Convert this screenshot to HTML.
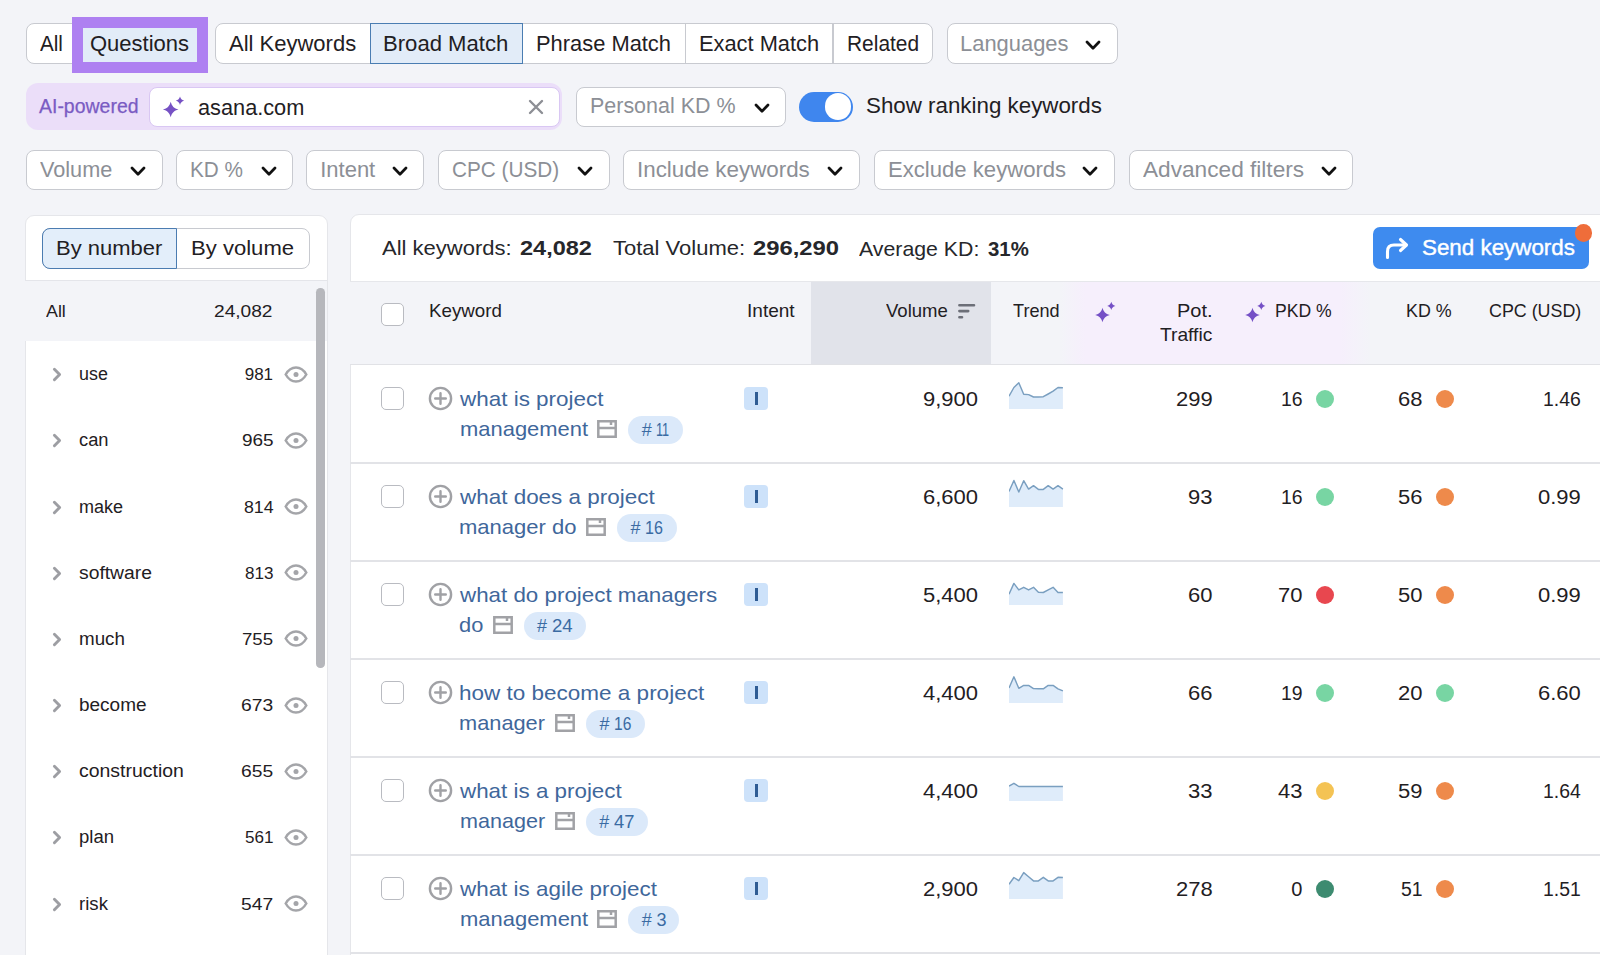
<!DOCTYPE html>
<html><head><meta charset="utf-8">
<style>
*{box-sizing:border-box;margin:0;padding:0}
html,body{width:1600px;height:955px;overflow:hidden;background:#f3f4f8;font-family:"Liberation Sans",sans-serif;color:#1f2023;position:relative}
.a{position:absolute}
.t{position:absolute;white-space:nowrap;line-height:1}
</style></head><body>
<div class="a" style="left:26px;top:23px;width:180px;height:41px;background:#fff;border:1.5px solid #c8cad0;border-radius:8px"></div>
<div class="a" style="left:78px;top:23px;width:127px;height:41px;background:#e2ecf8"></div>
<div class="t" style="left:39.70px;top:33.00px;font-size:22px;color:#1f2023;transform:scaleX(0.9388);transform-origin:0 0;">All</div>
<div class="t" style="left:90.00px;top:33.00px;font-size:22px;color:#1f2023;">Questions</div>
<div class="a" style="left:72px;top:16.5px;width:136.2px;height:56.7px;border:11px solid #ae80f1"></div>
<div class="a" style="left:215px;top:23px;width:718px;height:41px;background:#fff;border:1.5px solid #c8cad0;border-radius:8px"></div>
<div class="a" style="left:369.5px;top:23px;width:153.5px;height:41px;background:#e2ecf8;border:1.5px solid #4a7db2"></div>
<div class="a" style="left:684.5px;top:23px;width:1.5px;height:41px;background:#c8cad0"></div>
<div class="a" style="left:832px;top:23px;width:1.5px;height:41px;background:#c8cad0"></div>
<div class="t" style="left:229.00px;top:33.00px;font-size:22px;color:#1f2023;">All Keywords</div>
<div class="t" style="left:383.40px;top:33.00px;font-size:22px;color:#1f2023;transform:scaleX(1.0044);transform-origin:0 0;">Broad Match</div>
<div class="t" style="left:536.00px;top:33.00px;font-size:22px;color:#1f2023;transform:scaleX(0.9945);transform-origin:0 0;">Phrase Match</div>
<div class="t" style="left:699.00px;top:33.00px;font-size:22px;color:#1f2023;transform:scaleX(0.9917);transform-origin:0 0;">Exact Match</div>
<div class="t" style="left:847.00px;top:33.00px;font-size:22px;color:#1f2023;transform:scaleX(0.9505);transform-origin:0 0;">Related</div>
<div class="a" style="left:946.5px;top:23px;width:171.5px;height:41px;background:#fff;border:1.5px solid #c8cad0;border-radius:8px"></div>
<div class="t" style="left:960.00px;top:33.00px;font-size:22px;color:#8c8f96;transform:scaleX(0.9963);transform-origin:0 0;">Languages</div>
<svg class="a" style="left:1085px;top:39.5px;width:16px;height:10px" viewBox="0 0 16 10"><path d="M2 2 L8 8.2 L14 2" fill="none" stroke="#111" stroke-width="2.7" stroke-linecap="round" stroke-linejoin="round"/></svg>
<div class="a" style="left:26px;top:83px;width:536px;height:47px;background:#ebdef9;border-radius:12px"></div>
<div class="t" style="left:38.50px;top:96.00px;font-size:20px;color:#7a5bc3;transform:scaleX(0.9731);transform-origin:0 0;-webkit-text-stroke:0.25px #7a5bc3;">AI-powered</div>
<div class="a" style="left:149px;top:86.5px;width:410.5px;height:40.5px;background:#fff;border:1.5px solid #d9c7f3;border-radius:8px"></div>
<svg class="a" style="left:160px;top:94px;width:26px;height:26px" viewBox="0 0 26 26"><path d="M10.70 7.70 C11.95 12.22 13.98 14.25 18.50 15.50 C13.98 16.75 11.95 18.78 10.70 23.30 C9.45 18.78 7.42 16.75 2.90 15.50 C7.42 14.25 9.45 12.22 10.70 7.70ZM20.00 2.60 C20.67 5.04 21.76 6.13 24.20 6.80 C21.76 7.47 20.67 8.56 20.00 11.00 C19.33 8.56 18.24 7.47 15.80 6.80 C18.24 6.13 19.33 5.04 20.00 2.60Z" fill="#7651c4"/></svg>
<div class="t" style="left:198.30px;top:97.00px;font-size:22px;color:#1f2023;transform:scaleX(0.9879);transform-origin:0 0;">asana.com</div>
<svg class="a" style="left:528px;top:99px;width:16px;height:16px" viewBox="0 0 16 16"><path d="M2 2L14 14M14 2L2 14" stroke="#8d8f95" stroke-width="2.4" stroke-linecap="round"/></svg>
<div class="a" style="left:576px;top:86.5px;width:210px;height:40.5px;background:#fff;border:1.5px solid #c8cad0;border-radius:8px"></div>
<div class="t" style="left:589.75px;top:95.10px;font-size:22px;color:#8c8f96;transform:scaleX(0.9752);transform-origin:0 0;">Personal KD %</div>
<svg class="a" style="left:753.5px;top:102.5px;width:16px;height:10px" viewBox="0 0 16 10"><path d="M2 2 L8 8.2 L14 2" fill="none" stroke="#111" stroke-width="2.7" stroke-linecap="round" stroke-linejoin="round"/></svg>
<div class="a" style="left:798.5px;top:91.6px;width:54.299999999999955px;height:30.0px;background:#3f86ee;border-radius:15px"></div>
<div class="a" style="left:824.7px;top:93px;width:26.799999999999955px;height:26.799999999999997px;background:#fff;border-radius:50%"></div>
<div class="t" style="left:866.00px;top:94.80px;font-size:22px;color:#1f2023;transform:scaleX(1.0153);transform-origin:0 0;">Show ranking keywords</div>
<div class="a" style="left:26px;top:149.7px;width:136.5px;height:40.70000000000002px;background:#fff;border:1.5px solid #c8cad0;border-radius:8px"></div>
<div class="t" style="left:40.00px;top:158.50px;font-size:22px;color:#8c8f96;transform:scaleX(0.9850);transform-origin:0 0;">Volume</div>
<svg class="a" style="left:130.0px;top:165.5px;width:16px;height:10px" viewBox="0 0 16 10"><path d="M2 2 L8 8.2 L14 2" fill="none" stroke="#111" stroke-width="2.7" stroke-linecap="round" stroke-linejoin="round"/></svg>
<div class="a" style="left:175.6px;top:149.7px;width:117.6px;height:40.70000000000002px;background:#fff;border:1.5px solid #c8cad0;border-radius:8px"></div>
<div class="t" style="left:189.60px;top:158.50px;font-size:22px;color:#8c8f96;transform:scaleX(0.9422);transform-origin:0 0;">KD %</div>
<svg class="a" style="left:260.7px;top:165.5px;width:16px;height:10px" viewBox="0 0 16 10"><path d="M2 2 L8 8.2 L14 2" fill="none" stroke="#111" stroke-width="2.7" stroke-linecap="round" stroke-linejoin="round"/></svg>
<div class="a" style="left:306.2px;top:149.7px;width:118.19999999999999px;height:40.70000000000002px;background:#fff;border:1.5px solid #c8cad0;border-radius:8px"></div>
<div class="t" style="left:320.20px;top:158.50px;font-size:22px;color:#8c8f96;">Intent</div>
<svg class="a" style="left:391.9px;top:165.5px;width:16px;height:10px" viewBox="0 0 16 10"><path d="M2 2 L8 8.2 L14 2" fill="none" stroke="#111" stroke-width="2.7" stroke-linecap="round" stroke-linejoin="round"/></svg>
<div class="a" style="left:438px;top:149.7px;width:171.70000000000005px;height:40.70000000000002px;background:#fff;border:1.5px solid #c8cad0;border-radius:8px"></div>
<div class="t" style="left:452.00px;top:158.50px;font-size:22px;color:#8c8f96;transform:scaleX(0.9433);transform-origin:0 0;">CPC (USD)</div>
<svg class="a" style="left:577.2px;top:165.5px;width:16px;height:10px" viewBox="0 0 16 10"><path d="M2 2 L8 8.2 L14 2" fill="none" stroke="#111" stroke-width="2.7" stroke-linecap="round" stroke-linejoin="round"/></svg>
<div class="a" style="left:622.9px;top:149.7px;width:237.0px;height:40.70000000000002px;background:#fff;border:1.5px solid #c8cad0;border-radius:8px"></div>
<div class="t" style="left:636.90px;top:158.50px;font-size:22px;color:#8c8f96;transform:scaleX(1.0165);transform-origin:0 0;">Include keywords</div>
<svg class="a" style="left:827.4px;top:165.5px;width:16px;height:10px" viewBox="0 0 16 10"><path d="M2 2 L8 8.2 L14 2" fill="none" stroke="#111" stroke-width="2.7" stroke-linecap="round" stroke-linejoin="round"/></svg>
<div class="a" style="left:873.5px;top:149.7px;width:241.4000000000001px;height:40.70000000000002px;background:#fff;border:1.5px solid #c8cad0;border-radius:8px"></div>
<div class="t" style="left:887.50px;top:158.50px;font-size:22px;color:#8c8f96;transform:scaleX(1.0048);transform-origin:0 0;">Exclude keywords</div>
<svg class="a" style="left:1082.4px;top:165.5px;width:16px;height:10px" viewBox="0 0 16 10"><path d="M2 2 L8 8.2 L14 2" fill="none" stroke="#111" stroke-width="2.7" stroke-linecap="round" stroke-linejoin="round"/></svg>
<div class="a" style="left:1128.5px;top:149.7px;width:224.79999999999995px;height:40.70000000000002px;background:#fff;border:1.5px solid #c8cad0;border-radius:8px"></div>
<div class="t" style="left:1142.50px;top:158.50px;font-size:22px;color:#8c8f96;transform:scaleX(1.0294);transform-origin:0 0;">Advanced filters</div>
<svg class="a" style="left:1320.8px;top:165.5px;width:16px;height:10px" viewBox="0 0 16 10"><path d="M2 2 L8 8.2 L14 2" fill="none" stroke="#111" stroke-width="2.7" stroke-linecap="round" stroke-linejoin="round"/></svg>
<div class="a" style="left:24.5px;top:214.5px;width:303.0px;height:785.5px;background:#fff;border:1px solid #e5e6ea;border-radius:9px"></div>
<div class="a" style="left:42px;top:227.5px;width:268px;height:41.10000000000002px;background:#fff;border:1.5px solid #c8cad0;border-radius:8px"></div>
<div class="a" style="left:42px;top:227.5px;width:134.5px;height:41.10000000000002px;background:#e3eefa;border:1.5px solid #4b7cb1;border-radius:8px 0 0 8px"></div>
<div class="t" style="left:56.00px;top:237.00px;font-size:21px;color:#1f2023;transform:scaleX(1.0473);transform-origin:0 0;">By number</div>
<div class="t" style="left:191.00px;top:237.00px;font-size:21px;color:#1f2023;transform:scaleX(1.0510);transform-origin:0 0;">By volume</div>
<div class="a" style="left:25.3px;top:280px;width:301.5px;height:1px;background:#e4e5ea"></div>
<div class="a" style="left:25.3px;top:281px;width:301.5px;height:60.30000000000001px;background:#f3f4f8"></div>
<div class="t" style="left:46.00px;top:303.00px;font-size:17px;color:#1f2023;transform:scaleX(1.0500);transform-origin:0 0;">All</div>
<div class="t" style="left:214.00px;top:303.00px;font-size:17px;color:#1f2023;transform:scaleX(1.1250);transform-origin:0 0;">24,082</div>
<svg class="a" style="left:52px;top:367.3px;width:10px;height:15px" viewBox="0 0 10 15"><path d="M2.4 2.2 L7.6 7.5 L2.4 12.8" fill="none" stroke="#9d9ea3" stroke-width="2.9" stroke-linecap="round" stroke-linejoin="round"/></svg>
<div class="t" style="left:79.00px;top:365.30px;font-size:18px;color:#1f2023;transform:scaleX(0.9931);transform-origin:0 0;">use</div>
<div class="t" style="left:244.70px;top:366.30px;font-size:17px;color:#1f2023;">981</div>
<svg class="a" style="left:283.8px;top:365.8px;width:24px;height:17px" viewBox="0 0 24 17"><path d="M1.7 8.5 C4.6 3.4 8 1.5 12 1.5 C16 1.5 19.4 3.4 22.3 8.5 C19.4 13.6 16 15.5 12 15.5 C8 15.5 4.6 13.6 1.7 8.5Z" fill="none" stroke="#a4a5a9" stroke-width="2.5"/><circle cx="12" cy="8.5" r="2.5" fill="#a4a5a9"/></svg>
<svg class="a" style="left:52px;top:433.45000000000005px;width:10px;height:15px" viewBox="0 0 10 15"><path d="M2.4 2.2 L7.6 7.5 L2.4 12.8" fill="none" stroke="#9d9ea3" stroke-width="2.9" stroke-linecap="round" stroke-linejoin="round"/></svg>
<div class="t" style="left:79.00px;top:431.45px;font-size:18px;color:#1f2023;transform:scaleX(1.0172);transform-origin:0 0;">can</div>
<div class="t" style="left:241.50px;top:432.45px;font-size:17px;color:#1f2023;transform:scaleX(1.1150);transform-origin:0 0;">965</div>
<svg class="a" style="left:283.8px;top:431.95000000000005px;width:24px;height:17px" viewBox="0 0 24 17"><path d="M1.7 8.5 C4.6 3.4 8 1.5 12 1.5 C16 1.5 19.4 3.4 22.3 8.5 C19.4 13.6 16 15.5 12 15.5 C8 15.5 4.6 13.6 1.7 8.5Z" fill="none" stroke="#a4a5a9" stroke-width="2.5"/><circle cx="12" cy="8.5" r="2.5" fill="#a4a5a9"/></svg>
<svg class="a" style="left:52px;top:499.6px;width:10px;height:15px" viewBox="0 0 10 15"><path d="M2.4 2.2 L7.6 7.5 L2.4 12.8" fill="none" stroke="#9d9ea3" stroke-width="2.9" stroke-linecap="round" stroke-linejoin="round"/></svg>
<div class="t" style="left:79.00px;top:497.60px;font-size:18px;color:#1f2023;">make</div>
<div class="t" style="left:243.50px;top:498.60px;font-size:17px;color:#1f2023;transform:scaleX(1.0442);transform-origin:0 0;">814</div>
<svg class="a" style="left:283.8px;top:498.1px;width:24px;height:17px" viewBox="0 0 24 17"><path d="M1.7 8.5 C4.6 3.4 8 1.5 12 1.5 C16 1.5 19.4 3.4 22.3 8.5 C19.4 13.6 16 15.5 12 15.5 C8 15.5 4.6 13.6 1.7 8.5Z" fill="none" stroke="#a4a5a9" stroke-width="2.5"/><circle cx="12" cy="8.5" r="2.5" fill="#a4a5a9"/></svg>
<svg class="a" style="left:52px;top:565.75px;width:10px;height:15px" viewBox="0 0 10 15"><path d="M2.4 2.2 L7.6 7.5 L2.4 12.8" fill="none" stroke="#9d9ea3" stroke-width="2.9" stroke-linecap="round" stroke-linejoin="round"/></svg>
<div class="t" style="left:79.00px;top:563.75px;font-size:18px;color:#1f2023;transform:scaleX(1.0721);transform-origin:0 0;">software</div>
<div class="t" style="left:244.60px;top:564.75px;font-size:17px;color:#1f2023;transform:scaleX(1.0053);transform-origin:0 0;">813</div>
<svg class="a" style="left:283.8px;top:564.25px;width:24px;height:17px" viewBox="0 0 24 17"><path d="M1.7 8.5 C4.6 3.4 8 1.5 12 1.5 C16 1.5 19.4 3.4 22.3 8.5 C19.4 13.6 16 15.5 12 15.5 C8 15.5 4.6 13.6 1.7 8.5Z" fill="none" stroke="#a4a5a9" stroke-width="2.5"/><circle cx="12" cy="8.5" r="2.5" fill="#a4a5a9"/></svg>
<svg class="a" style="left:52px;top:631.9000000000001px;width:10px;height:15px" viewBox="0 0 10 15"><path d="M2.4 2.2 L7.6 7.5 L2.4 12.8" fill="none" stroke="#9d9ea3" stroke-width="2.9" stroke-linecap="round" stroke-linejoin="round"/></svg>
<div class="t" style="left:79.00px;top:629.90px;font-size:18px;color:#1f2023;transform:scaleX(1.0432);transform-origin:0 0;">much</div>
<div class="t" style="left:242.00px;top:630.90px;font-size:17px;color:#1f2023;transform:scaleX(1.0973);transform-origin:0 0;">755</div>
<svg class="a" style="left:283.8px;top:630.4000000000001px;width:24px;height:17px" viewBox="0 0 24 17"><path d="M1.7 8.5 C4.6 3.4 8 1.5 12 1.5 C16 1.5 19.4 3.4 22.3 8.5 C19.4 13.6 16 15.5 12 15.5 C8 15.5 4.6 13.6 1.7 8.5Z" fill="none" stroke="#a4a5a9" stroke-width="2.5"/><circle cx="12" cy="8.5" r="2.5" fill="#a4a5a9"/></svg>
<svg class="a" style="left:52px;top:698.05px;width:10px;height:15px" viewBox="0 0 10 15"><path d="M2.4 2.2 L7.6 7.5 L2.4 12.8" fill="none" stroke="#9d9ea3" stroke-width="2.9" stroke-linecap="round" stroke-linejoin="round"/></svg>
<div class="t" style="left:79.00px;top:696.05px;font-size:18px;color:#1f2023;transform:scaleX(1.0547);transform-origin:0 0;">become</div>
<div class="t" style="left:241.00px;top:697.05px;font-size:17px;color:#1f2023;transform:scaleX(1.1327);transform-origin:0 0;">673</div>
<svg class="a" style="left:283.8px;top:696.55px;width:24px;height:17px" viewBox="0 0 24 17"><path d="M1.7 8.5 C4.6 3.4 8 1.5 12 1.5 C16 1.5 19.4 3.4 22.3 8.5 C19.4 13.6 16 15.5 12 15.5 C8 15.5 4.6 13.6 1.7 8.5Z" fill="none" stroke="#a4a5a9" stroke-width="2.5"/><circle cx="12" cy="8.5" r="2.5" fill="#a4a5a9"/></svg>
<svg class="a" style="left:52px;top:764.2px;width:10px;height:15px" viewBox="0 0 10 15"><path d="M2.4 2.2 L7.6 7.5 L2.4 12.8" fill="none" stroke="#9d9ea3" stroke-width="2.9" stroke-linecap="round" stroke-linejoin="round"/></svg>
<div class="t" style="left:79.00px;top:762.20px;font-size:18px;color:#1f2023;transform:scaleX(1.0804);transform-origin:0 0;">construction</div>
<div class="t" style="left:241.00px;top:763.20px;font-size:17px;color:#1f2023;transform:scaleX(1.1327);transform-origin:0 0;">655</div>
<svg class="a" style="left:283.8px;top:762.7px;width:24px;height:17px" viewBox="0 0 24 17"><path d="M1.7 8.5 C4.6 3.4 8 1.5 12 1.5 C16 1.5 19.4 3.4 22.3 8.5 C19.4 13.6 16 15.5 12 15.5 C8 15.5 4.6 13.6 1.7 8.5Z" fill="none" stroke="#a4a5a9" stroke-width="2.5"/><circle cx="12" cy="8.5" r="2.5" fill="#a4a5a9"/></svg>
<svg class="a" style="left:52px;top:830.3500000000001px;width:10px;height:15px" viewBox="0 0 10 15"><path d="M2.4 2.2 L7.6 7.5 L2.4 12.8" fill="none" stroke="#9d9ea3" stroke-width="2.9" stroke-linecap="round" stroke-linejoin="round"/></svg>
<div class="t" style="left:79.00px;top:828.35px;font-size:18px;color:#1f2023;transform:scaleX(1.0294);transform-origin:0 0;">plan</div>
<div class="t" style="left:244.60px;top:829.35px;font-size:17px;color:#1f2023;transform:scaleX(1.0053);transform-origin:0 0;">561</div>
<svg class="a" style="left:283.8px;top:828.8500000000001px;width:24px;height:17px" viewBox="0 0 24 17"><path d="M1.7 8.5 C4.6 3.4 8 1.5 12 1.5 C16 1.5 19.4 3.4 22.3 8.5 C19.4 13.6 16 15.5 12 15.5 C8 15.5 4.6 13.6 1.7 8.5Z" fill="none" stroke="#a4a5a9" stroke-width="2.5"/><circle cx="12" cy="8.5" r="2.5" fill="#a4a5a9"/></svg>
<svg class="a" style="left:52px;top:896.5px;width:10px;height:15px" viewBox="0 0 10 15"><path d="M2.4 2.2 L7.6 7.5 L2.4 12.8" fill="none" stroke="#9d9ea3" stroke-width="2.9" stroke-linecap="round" stroke-linejoin="round"/></svg>
<div class="t" style="left:79.00px;top:894.50px;font-size:18px;color:#1f2023;transform:scaleX(1.0336);transform-origin:0 0;">risk</div>
<div class="t" style="left:241.00px;top:895.50px;font-size:17px;color:#1f2023;transform:scaleX(1.1327);transform-origin:0 0;">547</div>
<svg class="a" style="left:283.8px;top:895.0px;width:24px;height:17px" viewBox="0 0 24 17"><path d="M1.7 8.5 C4.6 3.4 8 1.5 12 1.5 C16 1.5 19.4 3.4 22.3 8.5 C19.4 13.6 16 15.5 12 15.5 C8 15.5 4.6 13.6 1.7 8.5Z" fill="none" stroke="#a4a5a9" stroke-width="2.5"/><circle cx="12" cy="8.5" r="2.5" fill="#a4a5a9"/></svg>
<div class="a" style="left:316px;top:288px;width:8.600000000000023px;height:380px;background:#b6b7bc;border-radius:4.3px"></div>
<div class="a" style="left:349.5px;top:213.8px;width:1290.5px;height:786.2px;background:#fff;border:1px solid #e5e6ea;border-radius:9px"></div>
<div class="t" style="left:381.70px;top:237.00px;font-size:21px;color:#26272b;transform:scaleX(1.0481);transform-origin:0 0;">All keywords:</div>
<div class="t" style="left:520.00px;top:237.00px;font-size:21px;color:#26272b;font-weight:700;transform:scaleX(1.1191);transform-origin:0 0;">24,082</div>
<div class="t" style="left:612.50px;top:237.00px;font-size:21px;color:#26272b;transform:scaleX(1.0476);transform-origin:0 0;">Total Volume:</div>
<div class="t" style="left:752.80px;top:237.00px;font-size:21px;color:#26272b;font-weight:700;transform:scaleX(1.1342);transform-origin:0 0;">296,290</div>
<div class="t" style="left:859.00px;top:237.50px;font-size:21px;color:#26272b;transform:scaleX(1.0139);transform-origin:0 0;">Average KD:</div>
<div class="t" style="left:988.00px;top:237.50px;font-size:21px;color:#26272b;font-weight:700;transform:scaleX(0.9702);transform-origin:0 0;">31%</div>
<div class="a" style="left:1373.2px;top:227px;width:216.29999999999995px;height:42px;background:#3e8bef;border-radius:7px"></div>
<svg class="a" style="left:1384px;top:236px;width:27px;height:24px" viewBox="0 0 27 24"><path d="M3.5 21.5 V15.5 Q3.5 9 10 9 H22" fill="none" stroke="#fff" stroke-width="3.1" stroke-linecap="round" stroke-linejoin="round"/><path d="M16.5 3.5 L22.5 9 L16.5 14.5" fill="none" stroke="#fff" stroke-width="3.1" stroke-linecap="round" stroke-linejoin="round"/></svg>
<div class="t" style="left:1421.80px;top:236.80px;font-size:22px;color:#fff;transform:scaleX(1.0166);transform-origin:0 0;-webkit-text-stroke:0.4px #fff;">Send keywords</div>
<div class="a" style="left:1574.8px;top:224.3px;width:17.4px;height:17.4px;border-radius:50%;background:#ef6d3a"></div>
<div class="a" style="left:350px;top:281px;width:1290px;height:83.5px;background:#f3f4f8"></div>
<div class="a" style="left:1060px;top:281px;width:310px;height:83.5px;background:linear-gradient(90deg,rgba(246,239,252,0) 0px,#f6effc 25px,#f6effc 280px,rgba(246,239,252,0) 310px)"></div>
<div class="a" style="left:810.5px;top:281px;width:180.29999999999995px;height:83.5px;background:#e1e3ea"></div>
<div class="a" style="left:350px;top:280.5px;width:1290px;height:1.0px;background:#e6e7eb"></div>
<div class="a" style="left:350px;top:364px;width:1290px;height:1.1999999999999886px;background:#e1e2e6"></div>
<div class="a" style="left:381px;top:303px;width:23px;height:23px;border:1.5px solid #b9bbc1;border-radius:5px;background:#fff"></div>
<div class="t" style="left:429.40px;top:301.40px;font-size:19px;color:#1f2023;transform:scaleX(0.9851);transform-origin:0 0;">Keyword</div>
<div class="t" style="left:747.40px;top:301.00px;font-size:19px;color:#1f2023;transform:scaleX(1.0021);transform-origin:0 0;">Intent</div>
<div class="t" style="left:886.00px;top:301.00px;font-size:19px;color:#1f2023;transform:scaleX(0.9764);transform-origin:0 0;">Volume</div>
<svg class="a" style="left:957px;top:303px;width:20px;height:17px" viewBox="0 0 20 17"><path d="M2.4 2.2H17M2.4 8.1H11.2M2.4 14.3H5" stroke="#6c6f78" stroke-width="2.6" stroke-linecap="round"/></svg>
<div class="t" style="left:1012.70px;top:301.00px;font-size:19px;color:#1f2023;transform:scaleX(0.9531);transform-origin:0 0;">Trend</div>
<svg class="a" style="left:1094.5px;top:300.5px;width:22px;height:22px" viewBox="0 0 22 22"><path d="M7.50 6.70 C8.67 10.93 10.57 12.83 14.80 14.00 C10.57 15.17 8.67 17.07 7.50 21.30 C6.33 17.07 4.43 15.17 0.20 14.00 C4.43 12.83 6.33 10.93 7.50 6.70ZM16.30 0.80 C16.96 3.18 18.02 4.24 20.40 4.90 C18.02 5.56 16.96 6.62 16.30 9.00 C15.64 6.62 14.58 5.56 12.20 4.90 C14.58 4.24 15.64 3.18 16.30 0.80Z" fill="#7550c6"/></svg>
<div class="t" style="left:1177.16px;top:301.00px;font-size:19px;color:#1f2023;transform:scaleX(1.0500);transform-origin:0 0;">Pot.</div>
<div class="t" style="left:1160.00px;top:325.00px;font-size:19px;color:#1f2023;transform:scaleX(1.0106);transform-origin:0 0;">Traffic</div>
<svg class="a" style="left:1245px;top:300.5px;width:22px;height:22px" viewBox="0 0 22 22"><path d="M7.50 6.70 C8.67 10.93 10.57 12.83 14.80 14.00 C10.57 15.17 8.67 17.07 7.50 21.30 C6.33 17.07 4.43 15.17 0.20 14.00 C4.43 12.83 6.33 10.93 7.50 6.70ZM16.30 0.80 C16.96 3.18 18.02 4.24 20.40 4.90 C18.02 5.56 16.96 6.62 16.30 9.00 C15.64 6.62 14.58 5.56 12.20 4.90 C14.58 4.24 15.64 3.18 16.30 0.80Z" fill="#7550c6"/></svg>
<div class="t" style="left:1275.30px;top:301.00px;font-size:19px;color:#1f2023;transform:scaleX(0.9257);transform-origin:0 0;">PKD %</div>
<div class="t" style="left:1406.40px;top:301.00px;font-size:19px;color:#1f2023;transform:scaleX(0.9402);transform-origin:0 0;">KD %</div>
<div class="t" style="left:1488.50px;top:301.00px;font-size:19px;color:#1f2023;transform:scaleX(0.9394);transform-origin:0 0;">CPC (USD)</div>
<div class="a" style="left:381px;top:387px;width:23px;height:23px;border:1.5px solid #b9bbc1;border-radius:5px;background:#fff"></div>
<svg class="a" style="left:428px;top:386px;width:25px;height:25px" viewBox="0 0 25 25"><circle cx="12.5" cy="12.5" r="10.6" fill="none" stroke="#a0a1a5" stroke-width="2.4"/><path d="M12.5 7.2V17.8M7.2 12.5H17.8" stroke="#a0a1a5" stroke-width="2.4" stroke-linecap="round"/></svg>
<div class="t" style="left:460.07px;top:387.50px;font-size:21px;color:#3f679b;transform:scaleX(1.0691);transform-origin:0 0;">what is project</div>
<div class="t" style="left:459.80px;top:417.50px;font-size:21px;color:#3f679b;transform:scaleX(1.0449);transform-origin:0 0;">management</div>
<svg class="a" style="left:596.5px;top:420px;width:20px;height:18px" viewBox="0 0 20 18"><path d="M1.3 1.3H18.7V16.7H1.3Z M1.3 8H18.7 M14 1.3V5" fill="none" stroke="#a1a2a6" stroke-width="2.5"/></svg>
<div class="a" style="left:628.4px;top:415.6px;width:55.0px;height:28.399999999999977px;background:#dbe9fa;border-radius:15px"></div>
<div class="t" style="left:641.70px;top:420.60px;font-size:18px;color:#3a6ba3;">#</div>
<div class="t" style="left:656.40px;top:420.60px;font-size:18px;color:#3a6ba3;transform:scaleX(0.7040);transform-origin:0 0;">11</div>
<div class="a" style="left:744.4px;top:387px;width:23.600000000000023px;height:23.100000000000023px;background:#cde2fa;border-radius:4px"></div>
<div class="a" style="left:755.2px;top:391.7px;width:2.599999999999909px;height:13.0px;background:#2f5c94"></div>
<div class="t" style="left:922.60px;top:389.00px;font-size:20px;color:#1f2023;transform:scaleX(1.1000);transform-origin:0 0;">9,900</div>
<svg class="a" style="left:1009px;top:381px;width:56px;height:30px" viewBox="0 0 56 30"><path d="M0,15.20 L0.00,15.20 4.90,6.50 9.80,1.80 14.70,13.30 19.60,13.60 24.50,16.00 29.40,16.00 34.30,15.70 39.20,13.00 44.10,10.20 49.00,6.50 53.90,6.80 L53.9,28 L0,28Z" fill="#dfecfa"/><polyline points="0.00,15.20 4.90,6.50 9.80,1.80 14.70,13.30 19.60,13.60 24.50,16.00 29.40,16.00 34.30,15.70 39.20,13.00 44.10,10.20 49.00,6.50 53.90,6.80" fill="none" stroke="#7a9fc0" stroke-width="1.45" stroke-linejoin="round"/></svg>
<div class="t" style="left:1175.55px;top:389.00px;font-size:20px;color:#1f2023;transform:scaleX(1.1000);transform-origin:0 0;">299</div>
<div class="t" style="left:1280.92px;top:389.00px;font-size:20px;color:#1f2023;transform:scaleX(0.9700);transform-origin:0 0;">16</div>
<div class="a" style="left:1315.75px;top:389.5px;width:18px;height:18px;border-radius:50%;background:#78d5a3"></div>
<div class="t" style="left:1398.28px;top:389.00px;font-size:20px;color:#1f2023;transform:scaleX(1.1000);transform-origin:0 0;">68</div>
<div class="a" style="left:1436px;top:389.5px;width:18px;height:18px;border-radius:50%;background:#ee8a4b"></div>
<div class="t" style="left:1543.17px;top:389.00px;font-size:20px;color:#1f2023;transform:scaleX(0.9700);transform-origin:0 0;">1.46</div>
<div class="a" style="left:350px;top:462px;width:1290px;height:1.5px;background:#e2e3e7"></div>
<div class="a" style="left:381px;top:485px;width:23px;height:23px;border:1.5px solid #b9bbc1;border-radius:5px;background:#fff"></div>
<svg class="a" style="left:428px;top:484px;width:25px;height:25px" viewBox="0 0 25 25"><circle cx="12.5" cy="12.5" r="10.6" fill="none" stroke="#a0a1a5" stroke-width="2.4"/><path d="M12.5 7.2V17.8M7.2 12.5H17.8" stroke="#a0a1a5" stroke-width="2.4" stroke-linecap="round"/></svg>
<div class="t" style="left:459.67px;top:485.50px;font-size:21px;color:#3f679b;transform:scaleX(1.0689);transform-origin:0 0;">what does a project</div>
<div class="t" style="left:459.40px;top:515.50px;font-size:21px;color:#3f679b;transform:scaleX(1.0491);transform-origin:0 0;">manager do</div>
<svg class="a" style="left:585.8px;top:518px;width:20px;height:18px" viewBox="0 0 20 18"><path d="M1.3 1.3H18.7V16.7H1.3Z M1.3 8H18.7 M14 1.3V5" fill="none" stroke="#a1a2a6" stroke-width="2.5"/></svg>
<div class="a" style="left:617.1px;top:513.6px;width:59.69999999999993px;height:28.399999999999977px;background:#dbe9fa;border-radius:15px"></div>
<div class="t" style="left:630.40px;top:518.60px;font-size:18px;color:#3a6ba3;">#</div>
<div class="t" style="left:645.10px;top:518.60px;font-size:18px;color:#3a6ba3;transform:scaleX(0.8950);transform-origin:0 0;">16</div>
<div class="a" style="left:744.4px;top:485px;width:23.600000000000023px;height:23.100000000000023px;background:#cde2fa;border-radius:4px"></div>
<div class="a" style="left:755.2px;top:489.7px;width:2.599999999999909px;height:13.0px;background:#2f5c94"></div>
<div class="t" style="left:922.60px;top:487.00px;font-size:20px;color:#1f2023;transform:scaleX(1.1000);transform-origin:0 0;">6,600</div>
<svg class="a" style="left:1009px;top:479px;width:56px;height:30px" viewBox="0 0 56 30"><path d="M0,12.50 L0.00,12.50 4.90,1.50 9.80,13.00 14.70,1.70 19.60,10.10 24.50,6.70 29.40,10.40 34.30,10.40 39.20,6.70 44.10,10.10 49.00,6.70 53.90,10.10 L53.9,28 L0,28Z" fill="#dfecfa"/><polyline points="0.00,12.50 4.90,1.50 9.80,13.00 14.70,1.70 19.60,10.10 24.50,6.70 29.40,10.40 34.30,10.40 39.20,6.70 44.10,10.10 49.00,6.70 53.90,10.10" fill="none" stroke="#7a9fc0" stroke-width="1.45" stroke-linejoin="round"/></svg>
<div class="t" style="left:1187.93px;top:487.00px;font-size:20px;color:#1f2023;transform:scaleX(1.1000);transform-origin:0 0;">93</div>
<div class="t" style="left:1280.92px;top:487.00px;font-size:20px;color:#1f2023;transform:scaleX(0.9700);transform-origin:0 0;">16</div>
<div class="a" style="left:1315.75px;top:487.5px;width:18px;height:18px;border-radius:50%;background:#78d5a3"></div>
<div class="t" style="left:1398.28px;top:487.00px;font-size:20px;color:#1f2023;transform:scaleX(1.1000);transform-origin:0 0;">56</div>
<div class="a" style="left:1436px;top:487.5px;width:18px;height:18px;border-radius:50%;background:#ee8a4b"></div>
<div class="t" style="left:1538.10px;top:487.00px;font-size:20px;color:#1f2023;transform:scaleX(1.1000);transform-origin:0 0;">0.99</div>
<div class="a" style="left:350px;top:560px;width:1290px;height:1.5px;background:#e2e3e7"></div>
<div class="a" style="left:381px;top:583px;width:23px;height:23px;border:1.5px solid #b9bbc1;border-radius:5px;background:#fff"></div>
<svg class="a" style="left:428px;top:582px;width:25px;height:25px" viewBox="0 0 25 25"><circle cx="12.5" cy="12.5" r="10.6" fill="none" stroke="#a0a1a5" stroke-width="2.4"/><path d="M12.5 7.2V17.8M7.2 12.5H17.8" stroke="#a0a1a5" stroke-width="2.4" stroke-linecap="round"/></svg>
<div class="t" style="left:459.67px;top:583.50px;font-size:21px;color:#3f679b;transform:scaleX(1.0645);transform-origin:0 0;">what do project managers</div>
<div class="t" style="left:459.40px;top:613.50px;font-size:21px;color:#3f679b;transform:scaleX(1.0409);transform-origin:0 0;">do</div>
<svg class="a" style="left:492.5px;top:616px;width:20px;height:18px" viewBox="0 0 20 18"><path d="M1.3 1.3H18.7V16.7H1.3Z M1.3 8H18.7 M14 1.3V5" fill="none" stroke="#a1a2a6" stroke-width="2.5"/></svg>
<div class="a" style="left:523.8px;top:611.6px;width:62.5px;height:28.399999999999977px;background:#dbe9fa;border-radius:15px"></div>
<div class="t" style="left:537.10px;top:616.60px;font-size:18px;color:#3a6ba3;">#</div>
<div class="t" style="left:551.80px;top:616.60px;font-size:18px;color:#3a6ba3;transform:scaleX(1.0350);transform-origin:0 0;">24</div>
<div class="a" style="left:744.4px;top:583px;width:23.600000000000023px;height:23.100000000000023px;background:#cde2fa;border-radius:4px"></div>
<div class="a" style="left:755.2px;top:587.7px;width:2.599999999999909px;height:13.0px;background:#2f5c94"></div>
<div class="t" style="left:922.60px;top:585.00px;font-size:20px;color:#1f2023;transform:scaleX(1.1000);transform-origin:0 0;">5,400</div>
<svg class="a" style="left:1009px;top:577px;width:56px;height:30px" viewBox="0 0 56 30"><path d="M0,17.30 L0.00,17.30 4.90,6.40 9.80,12.90 14.70,10.30 19.60,12.90 24.50,10.30 29.40,15.30 34.30,15.50 39.20,12.90 44.10,10.30 49.00,15.50 53.90,15.50 L53.9,28 L0,28Z" fill="#dfecfa"/><polyline points="0.00,17.30 4.90,6.40 9.80,12.90 14.70,10.30 19.60,12.90 24.50,10.30 29.40,15.30 34.30,15.50 39.20,12.90 44.10,10.30 49.00,15.50 53.90,15.50" fill="none" stroke="#7a9fc0" stroke-width="1.45" stroke-linejoin="round"/></svg>
<div class="t" style="left:1187.93px;top:585.00px;font-size:20px;color:#1f2023;transform:scaleX(1.1000);transform-origin:0 0;">60</div>
<div class="t" style="left:1278.03px;top:585.00px;font-size:20px;color:#1f2023;transform:scaleX(1.1000);transform-origin:0 0;">70</div>
<div class="a" style="left:1315.75px;top:585.5px;width:18px;height:18px;border-radius:50%;background:#e8474f"></div>
<div class="t" style="left:1398.28px;top:585.00px;font-size:20px;color:#1f2023;transform:scaleX(1.1000);transform-origin:0 0;">50</div>
<div class="a" style="left:1436px;top:585.5px;width:18px;height:18px;border-radius:50%;background:#ee8a4b"></div>
<div class="t" style="left:1538.10px;top:585.00px;font-size:20px;color:#1f2023;transform:scaleX(1.1000);transform-origin:0 0;">0.99</div>
<div class="a" style="left:350px;top:658px;width:1290px;height:1.5px;background:#e2e3e7"></div>
<div class="a" style="left:381px;top:681px;width:23px;height:23px;border:1.5px solid #b9bbc1;border-radius:5px;background:#fff"></div>
<svg class="a" style="left:428px;top:680px;width:25px;height:25px" viewBox="0 0 25 25"><circle cx="12.5" cy="12.5" r="10.6" fill="none" stroke="#a0a1a5" stroke-width="2.4"/><path d="M12.5 7.2V17.8M7.2 12.5H17.8" stroke="#a0a1a5" stroke-width="2.4" stroke-linecap="round"/></svg>
<div class="t" style="left:459.40px;top:681.50px;font-size:21px;color:#3f679b;transform:scaleX(1.0715);transform-origin:0 0;">how to become a project</div>
<div class="t" style="left:459.40px;top:711.50px;font-size:21px;color:#3f679b;transform:scaleX(1.0373);transform-origin:0 0;">manager</div>
<svg class="a" style="left:554.5px;top:714px;width:20px;height:18px" viewBox="0 0 20 18"><path d="M1.3 1.3H18.7V16.7H1.3Z M1.3 8H18.7 M14 1.3V5" fill="none" stroke="#a1a2a6" stroke-width="2.5"/></svg>
<div class="a" style="left:586.3px;top:709.6px;width:59.10000000000002px;height:28.399999999999977px;background:#dbe9fa;border-radius:15px"></div>
<div class="t" style="left:599.60px;top:714.60px;font-size:18px;color:#3a6ba3;">#</div>
<div class="t" style="left:614.30px;top:714.60px;font-size:18px;color:#3a6ba3;transform:scaleX(0.8650);transform-origin:0 0;">16</div>
<div class="a" style="left:744.4px;top:681px;width:23.600000000000023px;height:23.100000000000023px;background:#cde2fa;border-radius:4px"></div>
<div class="a" style="left:755.2px;top:685.7px;width:2.599999999999909px;height:13.0px;background:#2f5c94"></div>
<div class="t" style="left:922.60px;top:683.00px;font-size:20px;color:#1f2023;transform:scaleX(1.1000);transform-origin:0 0;">4,400</div>
<svg class="a" style="left:1009px;top:675px;width:56px;height:30px" viewBox="0 0 56 30"><path d="M0,13.00 L0.00,13.00 4.90,1.80 9.80,13.30 14.70,10.40 19.60,10.40 24.50,13.60 29.40,13.80 34.30,13.80 39.20,10.40 44.10,10.40 49.00,13.80 53.90,15.90 L53.9,28 L0,28Z" fill="#dfecfa"/><polyline points="0.00,13.00 4.90,1.80 9.80,13.30 14.70,10.40 19.60,10.40 24.50,13.60 29.40,13.80 34.30,13.80 39.20,10.40 44.10,10.40 49.00,13.80 53.90,15.90" fill="none" stroke="#7a9fc0" stroke-width="1.45" stroke-linejoin="round"/></svg>
<div class="t" style="left:1187.93px;top:683.00px;font-size:20px;color:#1f2023;transform:scaleX(1.1000);transform-origin:0 0;">66</div>
<div class="t" style="left:1280.92px;top:683.00px;font-size:20px;color:#1f2023;transform:scaleX(0.9700);transform-origin:0 0;">19</div>
<div class="a" style="left:1315.75px;top:683.5px;width:18px;height:18px;border-radius:50%;background:#78d5a3"></div>
<div class="t" style="left:1398.28px;top:683.00px;font-size:20px;color:#1f2023;transform:scaleX(1.1000);transform-origin:0 0;">20</div>
<div class="a" style="left:1436px;top:683.5px;width:18px;height:18px;border-radius:50%;background:#78d5a3"></div>
<div class="t" style="left:1538.10px;top:683.00px;font-size:20px;color:#1f2023;transform:scaleX(1.1000);transform-origin:0 0;">6.60</div>
<div class="a" style="left:350px;top:756px;width:1290px;height:1.5px;background:#e2e3e7"></div>
<div class="a" style="left:381px;top:779px;width:23px;height:23px;border:1.5px solid #b9bbc1;border-radius:5px;background:#fff"></div>
<svg class="a" style="left:428px;top:778px;width:25px;height:25px" viewBox="0 0 25 25"><circle cx="12.5" cy="12.5" r="10.6" fill="none" stroke="#a0a1a5" stroke-width="2.4"/><path d="M12.5 7.2V17.8M7.2 12.5H17.8" stroke="#a0a1a5" stroke-width="2.4" stroke-linecap="round"/></svg>
<div class="t" style="left:460.07px;top:779.50px;font-size:21px;color:#3f679b;transform:scaleX(1.0658);transform-origin:0 0;">what is a project</div>
<div class="t" style="left:459.80px;top:809.50px;font-size:21px;color:#3f679b;transform:scaleX(1.0277);transform-origin:0 0;">manager</div>
<svg class="a" style="left:554.8px;top:812px;width:20px;height:18px" viewBox="0 0 20 18"><path d="M1.3 1.3H18.7V16.7H1.3Z M1.3 8H18.7 M14 1.3V5" fill="none" stroke="#a1a2a6" stroke-width="2.5"/></svg>
<div class="a" style="left:586px;top:807.6px;width:62.200000000000045px;height:28.399999999999977px;background:#dbe9fa;border-radius:15px"></div>
<div class="t" style="left:599.30px;top:812.60px;font-size:18px;color:#3a6ba3;">#</div>
<div class="t" style="left:614.00px;top:812.60px;font-size:18px;color:#3a6ba3;transform:scaleX(1.0200);transform-origin:0 0;">47</div>
<div class="a" style="left:744.4px;top:779px;width:23.600000000000023px;height:23.100000000000023px;background:#cde2fa;border-radius:4px"></div>
<div class="a" style="left:755.2px;top:783.7px;width:2.599999999999909px;height:13.0px;background:#2f5c94"></div>
<div class="t" style="left:922.60px;top:781.00px;font-size:20px;color:#1f2023;transform:scaleX(1.1000);transform-origin:0 0;">4,400</div>
<svg class="a" style="left:1009px;top:773px;width:56px;height:30px" viewBox="0 0 56 30"><path d="M0,13.20 L0.00,13.20 4.90,10.30 9.80,13.50 14.70,13.50 19.60,13.50 24.50,13.50 29.40,13.50 34.30,13.50 39.20,13.50 44.10,13.50 49.00,13.50 53.90,13.50 L53.9,28 L0,28Z" fill="#dfecfa"/><polyline points="0.00,13.20 4.90,10.30 9.80,13.50 14.70,13.50 19.60,13.50 24.50,13.50 29.40,13.50 34.30,13.50 39.20,13.50 44.10,13.50 49.00,13.50 53.90,13.50" fill="none" stroke="#7a9fc0" stroke-width="1.45" stroke-linejoin="round"/></svg>
<div class="t" style="left:1187.93px;top:781.00px;font-size:20px;color:#1f2023;transform:scaleX(1.1000);transform-origin:0 0;">33</div>
<div class="t" style="left:1278.03px;top:781.00px;font-size:20px;color:#1f2023;transform:scaleX(1.1000);transform-origin:0 0;">43</div>
<div class="a" style="left:1315.75px;top:781.5px;width:18px;height:18px;border-radius:50%;background:#f4c354"></div>
<div class="t" style="left:1398.28px;top:781.00px;font-size:20px;color:#1f2023;transform:scaleX(1.1000);transform-origin:0 0;">59</div>
<div class="a" style="left:1436px;top:781.5px;width:18px;height:18px;border-radius:50%;background:#ee8a4b"></div>
<div class="t" style="left:1543.17px;top:781.00px;font-size:20px;color:#1f2023;transform:scaleX(0.9700);transform-origin:0 0;">1.64</div>
<div class="a" style="left:350px;top:854px;width:1290px;height:1.5px;background:#e2e3e7"></div>
<div class="a" style="left:381px;top:877px;width:23px;height:23px;border:1.5px solid #b9bbc1;border-radius:5px;background:#fff"></div>
<svg class="a" style="left:428px;top:876px;width:25px;height:25px" viewBox="0 0 25 25"><circle cx="12.5" cy="12.5" r="10.6" fill="none" stroke="#a0a1a5" stroke-width="2.4"/><path d="M12.5 7.2V17.8M7.2 12.5H17.8" stroke="#a0a1a5" stroke-width="2.4" stroke-linecap="round"/></svg>
<div class="t" style="left:460.07px;top:877.50px;font-size:21px;color:#3f679b;transform:scaleX(1.0674);transform-origin:0 0;">what is agile project</div>
<div class="t" style="left:459.80px;top:907.50px;font-size:21px;color:#3f679b;transform:scaleX(1.0457);transform-origin:0 0;">management</div>
<svg class="a" style="left:596.8px;top:910px;width:20px;height:18px" viewBox="0 0 20 18"><path d="M1.3 1.3H18.7V16.7H1.3Z M1.3 8H18.7 M14 1.3V5" fill="none" stroke="#a1a2a6" stroke-width="2.5"/></svg>
<div class="a" style="left:628.4px;top:905.6px;width:50.89999999999998px;height:28.399999999999977px;background:#dbe9fa;border-radius:15px"></div>
<div class="t" style="left:641.70px;top:910.60px;font-size:18px;color:#3a6ba3;">#</div>
<div class="t" style="left:656.40px;top:910.60px;font-size:18px;color:#3a6ba3;">3</div>
<div class="a" style="left:744.4px;top:877px;width:23.600000000000023px;height:23.100000000000023px;background:#cde2fa;border-radius:4px"></div>
<div class="a" style="left:755.2px;top:881.7px;width:2.599999999999909px;height:13.0px;background:#2f5c94"></div>
<div class="t" style="left:922.60px;top:879.00px;font-size:20px;color:#1f2023;transform:scaleX(1.1000);transform-origin:0 0;">2,900</div>
<svg class="a" style="left:1009px;top:871px;width:56px;height:30px" viewBox="0 0 56 30"><path d="M0,13.30 L0.00,13.30 4.90,6.50 9.80,9.70 14.70,1.60 19.60,5.80 24.50,9.90 29.40,9.90 34.30,6.30 39.20,9.90 44.10,9.90 49.00,6.30 53.90,6.50 L53.9,28 L0,28Z" fill="#dfecfa"/><polyline points="0.00,13.30 4.90,6.50 9.80,9.70 14.70,1.60 19.60,5.80 24.50,9.90 29.40,9.90 34.30,6.30 39.20,9.90 44.10,9.90 49.00,6.30 53.90,6.50" fill="none" stroke="#7a9fc0" stroke-width="1.45" stroke-linejoin="round"/></svg>
<div class="t" style="left:1175.55px;top:879.00px;font-size:20px;color:#1f2023;transform:scaleX(1.1000);transform-origin:0 0;">278</div>
<div class="t" style="left:1291.25px;top:879.00px;font-size:20px;color:#1f2023;">0</div>
<div class="a" style="left:1315.75px;top:879.5px;width:18px;height:18px;border-radius:50%;background:#3d8b70"></div>
<div class="t" style="left:1401.17px;top:879.00px;font-size:20px;color:#1f2023;transform:scaleX(0.9700);transform-origin:0 0;">51</div>
<div class="a" style="left:1436px;top:879.5px;width:18px;height:18px;border-radius:50%;background:#ee8a4b"></div>
<div class="t" style="left:1543.17px;top:879.00px;font-size:20px;color:#1f2023;transform:scaleX(0.9700);transform-origin:0 0;">1.51</div>
<div class="a" style="left:350px;top:952px;width:1290px;height:1.5px;background:#e2e3e7"></div>
</body></html>
